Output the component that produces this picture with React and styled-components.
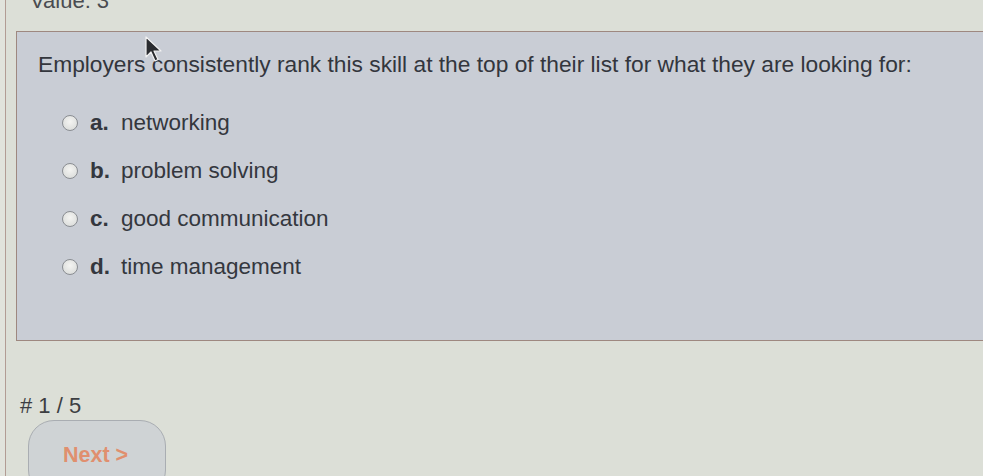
import React from "react";
import styled, { createGlobalStyle } from "styled-components";

const GlobalStyle = createGlobalStyle`
  html, body {
    margin: 0;
    padding: 0;
    background: #dde0d8;
    overflow: hidden;
  }
  body {
    font-family: "Liberation Sans", Arial, sans-serif;
  }
`;

const options = [
  { key: "a.", label: "networking" },
  { key: "b.", label: "problem solving" },
  { key: "c.", label: "good communication" },
  { key: "d.", label: "time management" },
];

export default function App() {
  return (
    <Page>
      <GlobalStyle />
      <Frame>
        <ValueLine>Value: 3</ValueLine>
        <QuestionBox>
          <Question>
            Employers consistently rank this skill at the top of their list for
            what they are looking for:
          </Question>
          <OptionList>
            {options.map((o) => (
              <OptionRow key={o.key}>
                <Radio />
                <Letter>{o.key}</Letter>
                <Label>{o.label}</Label>
              </OptionRow>
            ))}
          </OptionList>
          <Cursor viewBox="0 0 24 26">
            <path
              d="M2 1 L2 21 L7 16 L11 25 L14 23.5 L10 15 L17 15 Z"
              fill="#2a2c30"
              stroke="#f2f2f2"
              strokeWidth="1.2"
              strokeLinejoin="round"
            />
          </Cursor>
        </QuestionBox>
        <Counter># 1 / 5</Counter>
        <NextButton>Next &gt;</NextButton>
      </Frame>
    </Page>
  );
}

const Page = styled.div`
  width: 983px;
  height: 476px;
  overflow: hidden;
  background: #e1e3dc;
`;

const Frame = styled.div`
  margin-left: 5px;
  height: 100%;
  border-left: 1px solid #b29c94;
  background: #dcdfd7;
  padding-left: 10px;
  display: flex;
  flex-direction: column;
`;

const ValueLine = styled.div`
  flex: none;
  margin-top: -12px;
  margin-left: 14px;
  font-size: 22px;
  line-height: 26px;
  color: #4a4c50;
  height: 19px;
`;

const QuestionBox = styled.div`
  flex: none;
  position: relative;
  margin-top: 24px;
  margin-right: -30px;
  height: 310px;
  box-sizing: border-box;
  background: #c9cdd5;
  border: 1px solid #9e8880;
  border-right: none;
  padding: 18px 0 0 21px;
`;

const Question = styled.div`
  font-size: 22.75px;
  line-height: 28px;
  color: #33363d;
  white-space: nowrap;
`;

const OptionList = styled.div`
  display: flex;
  flex-direction: column;
  gap: 20px;
  margin-top: 31px;
  padding-left: 24px;
`;

const OptionRow = styled.div`
  display: flex;
  align-items: center;
  height: 28px;
  font-size: 22.5px;
  color: #34373e;
`;

const Radio = styled.span`
  width: 14px;
  height: 14px;
  border-radius: 50%;
  border: 1px solid #8a8d92;
  background: radial-gradient(circle at 50% 40%, #f4f4f2, #d6d8d6);
  margin-right: 12px;
  flex: none;
`;

const Letter = styled.span`
  font-weight: bold;
  width: 31px;
`;

const Label = styled.span``;

const Cursor = styled.svg`
  position: absolute;
  left: 127px;
  top: 4px;
  width: 24px;
  height: 26px;
`;

const Counter = styled.div`
  flex: none;
  margin-top: 52px;
  margin-left: 4px;
  font-size: 22px;
  line-height: 26px;
  color: #3c3e42;
  word-spacing: 0px;
`;

const NextButton = styled.button`
  flex: none;
  margin-top: 1px;
  margin-left: 12px;
  width: 138px;
  height: 76px;
  border-radius: 26px;
  border: 1px solid #a9adb2;
  background: #cfd3d5;
  color: #e08f6e;
  font-family: "Liberation Sans", Arial, sans-serif;
  font-size: 21.5px;
  font-weight: bold;
  text-align: left;
  padding: 0 0 6px 34px;
  cursor: pointer;
`;
